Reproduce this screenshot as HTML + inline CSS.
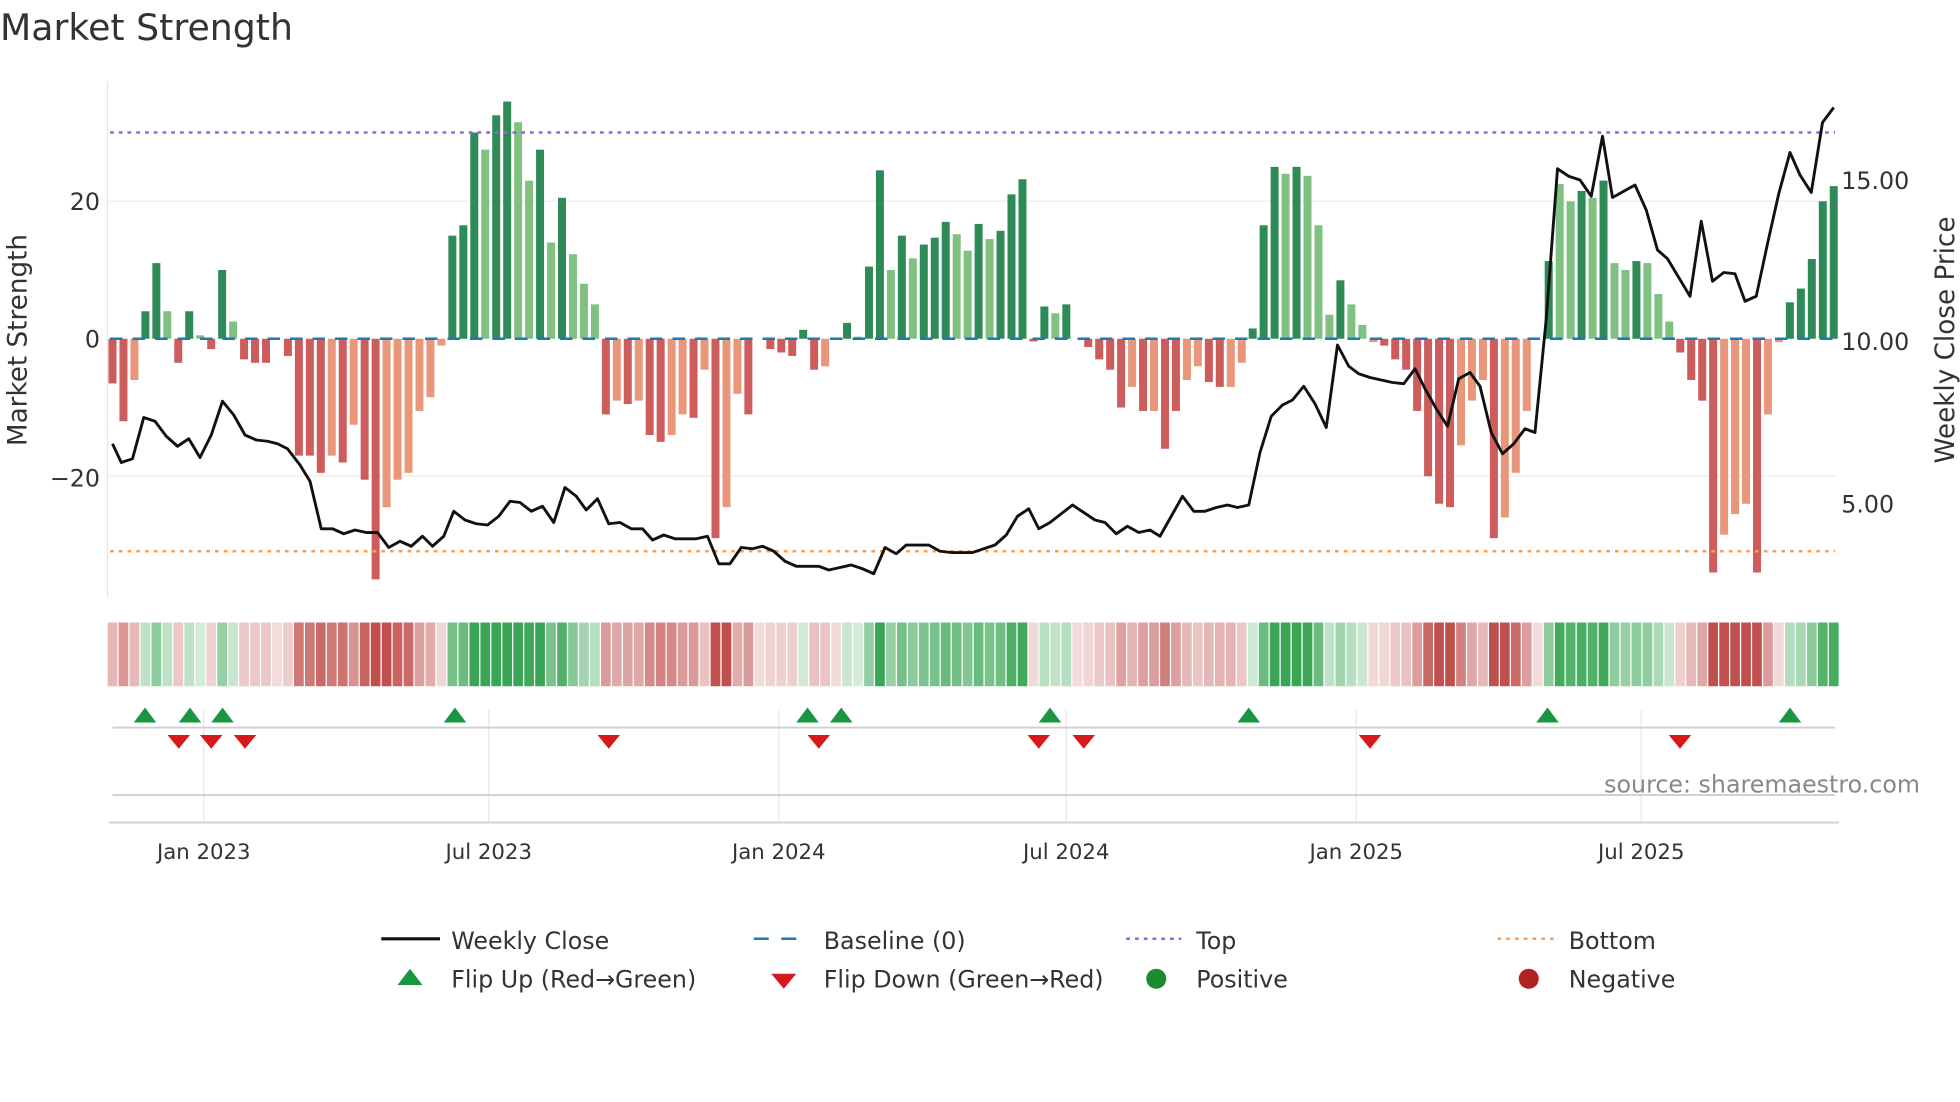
<!DOCTYPE html>
<html><head><meta charset="utf-8"><style>
html,body{margin:0;padding:0;background:#fff;}
svg{display:block;font-family:"DejaVu Sans","Liberation Sans",sans-serif;}
</style></head><body>
<svg id="s" width="1960" height="1102" viewBox="0 0 1568 881.6" xmlns="http://www.w3.org/2000/svg">
<rect width="1568" height="881.6" fill="#fff"/>
<text x="0" y="32" font-size="29" fill="#333">Market Strength</text>
<line x1="86" y1="65" x2="86" y2="478" stroke="#e5e5e5"/>
<line x1="86" y1="161" x2="1470" y2="161" stroke="#eeeeee"/>
<line x1="86" y1="381" x2="1470" y2="381" stroke="#eeeeee"/>
<text x="80" y="168" font-size="19" fill="#333" text-anchor="end">20</text>
<text x="80" y="278" font-size="19" fill="#333" text-anchor="end">0</text>
<text x="80" y="389" font-size="19" fill="#333" text-anchor="end">−20</text>
<text x="1473" y="151" font-size="19" fill="#333">15.00</text>
<text x="1473" y="280" font-size="19" fill="#333">10.00</text>
<text x="1473" y="410" font-size="19" fill="#333">5.00</text>
<text transform="translate(21,272) rotate(-90)" font-size="21" fill="#333" text-anchor="middle">Market Strength</text>
<text transform="translate(1563,272) rotate(-90)" font-size="21" fill="#333" text-anchor="middle">Weekly Close Price</text>
<g id="bars"></g>
<line x1="88" y1="271" x2="1468" y2="271" stroke="#1f77b4" stroke-width="2" stroke-dasharray="10,8"/>
<line x1="88" y1="106" x2="1468" y2="106" stroke="#9b5fe0" stroke-width="2" stroke-dasharray="3,4"/>
<line x1="88" y1="441" x2="1468" y2="441" stroke="#f4a05a" stroke-width="2" stroke-dasharray="3,4"/>
<polyline id="price" fill="none" stroke="#111" stroke-width="2.3" stroke-linejoin="round"/>
<g id="heat"></g>
<g stroke="#e6e6e6">
<line x1="163" y1="568" x2="163" y2="658"/><line x1="391" y1="568" x2="391" y2="658"/>
<line x1="623" y1="568" x2="623" y2="658"/><line x1="853" y1="568" x2="853" y2="658"/>
<line x1="1085" y1="568" x2="1085" y2="658"/><line x1="1313" y1="568" x2="1313" y2="658"/>
</g>
<line x1="90" y1="582" x2="1468" y2="582" stroke="#cfcfcf" stroke-width="1.5"/>
<line x1="90" y1="636" x2="1468" y2="636" stroke="#cfcfcf" stroke-width="1.5"/>
<line x1="87" y1="658" x2="1471" y2="658" stroke="#cfcfcf" stroke-width="1.5"/>
<g id="sig"></g>
<text x="1536" y="634" font-size="19" fill="#888" text-anchor="end">source: sharemaestro.com</text>
<g font-size="17" fill="#333" text-anchor="middle">
<text x="163" y="687">Jan 2023</text><text x="391" y="687">Jul 2023</text><text x="623" y="687">Jan 2024</text>
<text x="853" y="687">Jul 2024</text><text x="1085" y="687">Jan 2025</text><text x="1313" y="687">Jul 2025</text>
</g>
<g font-size="19" fill="#333">
<line x1="305" y1="751" x2="352" y2="751" stroke="#111" stroke-width="2.5"/>
<text x="361" y="759">Weekly Close</text>
<line x1="603" y1="751" x2="647" y2="751" stroke="#1f77b4" stroke-width="2" stroke-dasharray="12,10"/>
<text x="659" y="759">Baseline (0)</text>
<line x1="901" y1="751" x2="945" y2="751" stroke="#9b5fe0" stroke-width="2" stroke-dasharray="3,4"/>
<text x="957" y="759">Top</text>
<line x1="1198" y1="751" x2="1243" y2="751" stroke="#f4a05a" stroke-width="2" stroke-dasharray="3,4"/>
<text x="1255" y="759">Bottom</text>
<polygon points="318,788 338,788 328,775" fill="#1a9641"/>
<text x="361" y="790">Flip Up (Red→Green)</text>
<polygon points="617,779 637,779 627,791" fill="#d7191c"/>
<text x="659" y="790">Flip Down (Green→Red)</text>
<circle cx="925" cy="783" r="8" fill="#1e8b2e"/>
<text x="957" y="790">Positive</text>
<circle cx="1223" cy="783" r="8" fill="#b22222"/>
<text x="1255" y="790">Negative</text>
</g>
</svg>
<script>
var NS="http://www.w3.org/2000/svg";
var B="-6.5R -12R -6O 4D 11D 4L -3.5R 4D 0.5L -1.5R 10D 2.5L -3R -3.5R -3.5R 0R -2.5R -17R -17R -19.5R -17O -18R -12.5O -20.5R -35R -24.5O -20.5O -19.5O -10.5O -8.5O -1O 15D 16.5D 30D 27.5L 32.5D 34.5D 31.5L 23L 27.5D 14L 20.5D 12.3L 8L 5L -11R -9O -9.5R -9O -14R -15R -14O -11O -11.5R -4.5O -29R -24.5O -8O -11R 0R -1.5R -2R -2.5R 1.3D -4.5R -4O 0R 2.3D 0.3L 10.5D 24.5D 10L 15D 11.7L 13.7D 14.7D 17D 15.2L 12.8L 16.7D 14.5L 15.7D 21D 23.2D -0.4R 4.7D 3.7L 5D 0R -1.2R -3R -4.5R -10R -7O -10.5R -10.5O -16R -10.5R -6O -4O -6.3R -7R -7O -3.5O 1.5D 16.5D 25D 24L 25D 23.7L 16.5L 3.5L 8.5D 5L 2L -0.5O -1R -3R -4.5R -10.5R -20R -24R -24.5R -15.5O -9O -6O -29R -26O -19.5O -10.5O 0R 11.3D 22.5L 20L 21.5D 20.5L 23D 11L 10L 11.3D 11L 6.5L 2.5L -2R -6R -9R -34R -28.5O -25.5O -24O -34R -11O -0.5O 5.3D 7.3D 11.6D 20D 22.2D".split(" ");
var col={D:"#2e8b57",L:"#80c080",R:"#cd5c5c",O:"#e9967a"};
var n=B.length,x0=90,x1=1467,step=(x1-x0)/(n-1);
var bars=document.getElementById("bars"),heat=document.getElementById("heat");
for(var i=0;i<n;i++){
 var s=B[i],t=s.slice(-1),v=parseFloat(s),x=x0+i*step;
 if(v!==0){var r=document.createElementNS(NS,"rect");
 var h=Math.abs(v)*5.5;r.setAttribute("x",x-3.2);r.setAttribute("width",6.4);
 r.setAttribute("y",v>0?271-h:271);r.setAttribute("height",h);r.setAttribute("fill",col[t]);bars.appendChild(r);}
 var c=document.createElementNS(NS,"rect");
 c.setAttribute("x",x-step/2+0.5);c.setAttribute("width",step-1);c.setAttribute("y",498);c.setAttribute("height",51);
 var a=Math.min(1,0.2+Math.abs(v)/30);
 c.setAttribute("fill",v>0?"#3aa655":"#c0504d");c.setAttribute("fill-opacity",a.toFixed(2));heat.appendChild(c);
}
var P=[[90,355],[97,370],[106,367],[115,334],[124,337],[133,349],[142,357],[151,351],[160,366],[169,348],[178,321],[187,332],[196,348],[205,352],[214,353],[222,355],[230,359],[240,372],[248,385],[257,423],[266,423],[275,427],[284,424],[293,426],[302,426],[311,438],[320,433],[329,437],[338,429],[346,437],[355,429],[363,409],[372,416],[381,419],[390,420],[399,413],[408,401],[416,402],[425,409],[434,405],[443,418],[452,390],[461,397],[469,408],[478,399],[487,419],[496,418],[505,423],[514,423],[522,432],[531,428],[540,431],[549,431],[557,431],[566,429],[575,451],[584,451],[593,438],[602,439],[610,437],[619,441],[628,449],[637,453],[646,453],[655,453],[663,456],[672,454],[681,452],[690,455],[699,459],[708,438],[717,443],[725,436],[734,436],[743,436],[752,441],[761,442],[769,442],[778,442],[787,439],[796,436],[805,428],[814,413],[823,407],[831,423],[840,418],[849,411],[858,404],[867,410],[876,416],[884,418],[893,427],[902,421],[911,426],[920,424],[928,429],[937,413],[946,397],[955,409],[964,409],[973,406],[982,404],[990,406],[999,404],[1008,362],[1017,333],[1026,324],[1034,320],[1043,309],[1052,323],[1061,342],[1070,276],[1079,293],[1087,299],[1096,302],[1105,304],[1114,306],[1123,307],[1132,295],[1140,311],[1149,327],[1158,341],[1167,303],[1176,298],[1184,309],[1193,346],[1202,363],[1211,355],[1220,343],[1228,346],[1237,255],[1246,135],[1255,141],[1264,144],[1273,157],[1282,109],[1290,158],[1299,153],[1308,148],[1317,168],[1326,200],[1334,207],[1343,222],[1352,237],[1361,177],[1370,225],[1379,218],[1388,219],[1396,241],[1405,237],[1414,195],[1423,155],[1432,122],[1440,140],[1449,154],[1458,98],[1467,86]];
document.getElementById("price").setAttribute("points",P.map(function(p){return p.join(",")}).join(" "));
var sig=document.getElementById("sig");
[116,152,178,364,646,673,840,999,1238,1432].forEach(function(x){var p=document.createElementNS(NS,"polygon");p.setAttribute("points",(x-9)+",578 "+(x+9)+",578 "+x+",566");p.setAttribute("fill","#1a9641");sig.appendChild(p);});
[143,169,196,487,655,831,867,1096,1344].forEach(function(x){var p=document.createElementNS(NS,"polygon");p.setAttribute("points",(x-9)+",588 "+(x+9)+",588 "+x+",599");p.setAttribute("fill","#d7191c");sig.appendChild(p);});
</script>
</body></html>
